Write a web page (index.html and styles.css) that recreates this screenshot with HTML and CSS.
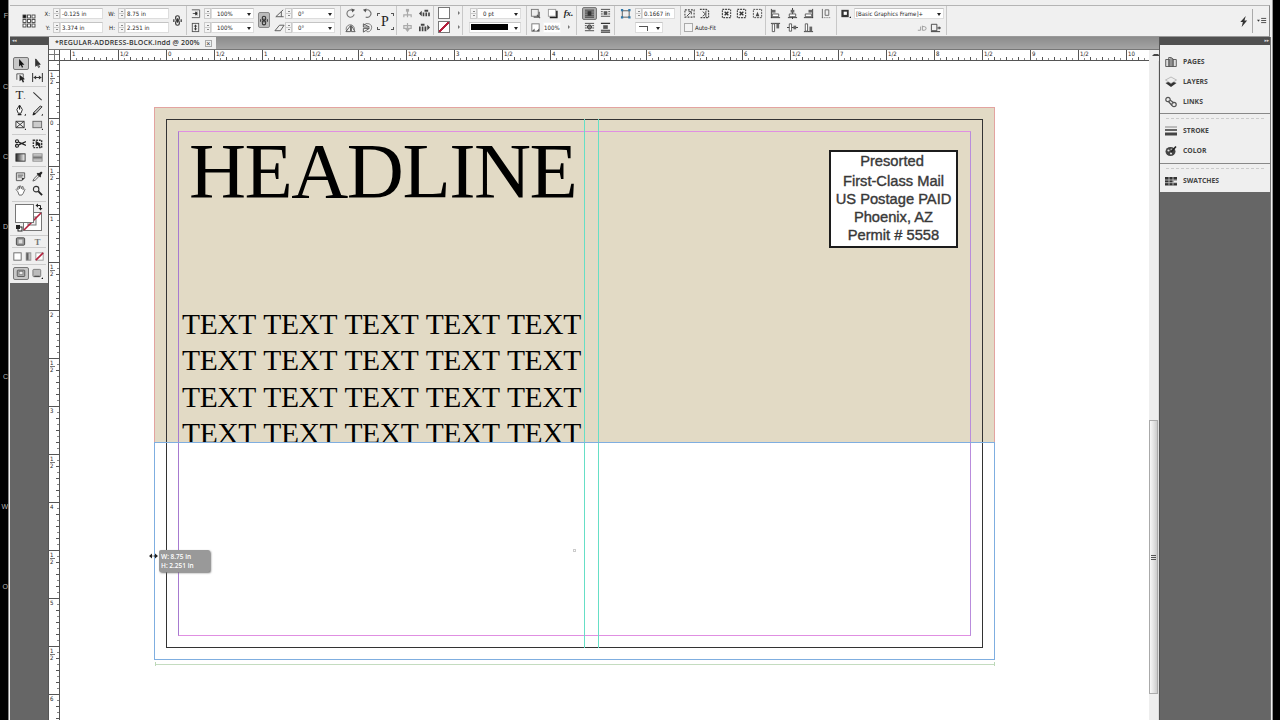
FILE: index.html
```html
<!DOCTYPE html>
<html lang="en">
<head>
  <meta charset="UTF-8" />
  <meta name="viewport" content="width=device-width, initial-scale=1.0" />
  <title>REGULAR-ADDRESS-BLOCK.indd</title>
  <link rel="stylesheet" href="styles.css">
</head>
<body>
  <!-- icon sprite -->
  <svg class="sprite">
    <symbol id="refpoint" viewBox="0 0 14 14"><g fill="#fff" stroke="#444" stroke-width=".9"><rect x="1" y="1" width="3" height="3" fill="#111"/><rect x="5.5" y="1" width="3" height="3"/><rect x="10" y="1" width="3" height="3"/><rect x="1" y="5.5" width="3" height="3"/><rect x="5.5" y="5.5" width="3" height="3"/><rect x="10" y="5.5" width="3" height="3"/><rect x="1" y="10" width="3" height="3"/><rect x="5.5" y="10" width="3" height="3"/><rect x="10" y="10" width="3" height="3"/></g></symbol>
    <symbol id="chain" viewBox="0 0 12 12"><g fill="none" stroke="#333" stroke-width="1.3"><rect x="4" y=".8" width="4" height="5" rx="2"/><rect x="4" y="6.2" width="4" height="5" rx="2"/><path d="M6 3.5v5M2 4.5v3M10 4.5v3"/></g></symbol>
    <symbol id="scale-x" viewBox="0 0 12 12"><path d="M2 2h8.500v8.500H2M3 6h5M6 4v4" fill="none" stroke="#555"/><path d="M5 6l3-2.500v5z" fill="#333"/></symbol>
    <symbol id="scale-y" viewBox="0 0 12 12"><rect x="2.500" y="1.500" width="7" height="9" fill="none" stroke="#555"/><path d="M6 3v6" stroke="#333"/><path d="M4 5l2-2 2 2zM4 7l2 2 2-2z" fill="#333"/></symbol>
    <symbol id="angle" viewBox="0 0 12 12"><path d="M10 2L2 9.500h8.500M8 4v5.500" fill="none" stroke="#555"/></symbol>
    <symbol id="shear" viewBox="0 0 12 12"><path d="M1 9.500h6l4-6H6z" fill="none" stroke="#555"/></symbol>
    <symbol id="rot-cw" viewBox="0 0 12 12"><path d="M10 7A4 4 0 1 1 8.500 2.800" fill="none" stroke="#777" stroke-width="1.200"/><path d="M7 .5l4 1.500-3 3z" fill="#555"/></symbol>
    <symbol id="rot-ccw" viewBox="0 0 12 12"><path d="M3.500 2.800A4 4 0 1 1 4 9.700" fill="none" stroke="#777" stroke-width="1.200"/><path d="M5 .5L1 2l3 3z" fill="#555"/></symbol>
    <symbol id="flip-h" viewBox="0 0 12 12"><path d="M2 10A4.500 4.500 0 1 1 10 9" fill="none" stroke="#777"/><path d="M1 10.500L6 4v6.500zM7 10.500V4l4 6.500z" fill="none" stroke="#555"/></symbol>
    <symbol id="flip-v" viewBox="0 0 12 12"><path d="M2 4A4.500 4.500 0 1 1 5 10.500" fill="none" stroke="#777"/><path d="M1.500 5.500H8L1.500 2zM1.500 7H8l-6.500 4z" fill="none" stroke="#555"/></symbol>
    <symbol id="tree-up" viewBox="0 0 12 12"><path d="M6 2v5M2 10V7.500h8V10M6 7v3" fill="none" stroke="#aaa" stroke-width="1.300"/><path d="M4.300 1h3.400v3H4.300z" fill="#aaa"/></symbol>
    <symbol id="tree-down" viewBox="0 0 12 12"><path d="M2 4h8v3H2zM6 1v9" fill="none" stroke="#aaa" stroke-width="1.300"/><path d="M3.500 7.500h5L6 11z" fill="#aaa"/></symbol>
    <symbol id="tree-prev" viewBox="0 0 12 12"><path d="M0 6l3-3v6zM4 5h1.800v4H4zM7 5h1.800v4H7zM10 5h1.800v4H10zM6 2h4v2H6z" fill="#444"/></symbol>
    <symbol id="tree-next" viewBox="0 0 12 12"><path d="M12 6L9 3v6zM0 5h1.800v5H0zM3 5h1.800v5H3zM6 5h2v5H6zM2 2h4v2H2z" fill="#444"/></symbol>
    <symbol id="effect" viewBox="0 0 12 12"><rect x="1.500" y="1.500" width="7.500" height="7.500" fill="#eee" stroke="#777"/><path d="M7.500 7.500l3.500 3.500M10 4v6H4" stroke="#555" stroke-width="1.200" fill="none"/></symbol>
    <symbol id="shadow" viewBox="0 0 12 12"><path d="M3 10h7.500V3" fill="none" stroke="#222" stroke-width="2.200"/><rect x="1.500" y="1.500" width="8" height="7.500" fill="#fff" stroke="#999"/></symbol>
    <symbol id="opacity" viewBox="0 0 12 12"><rect x="2" y="2" width="8" height="8" fill="#fff" stroke="#777"/><path d="M2 10l3-3v3zM7 10h3V7z" fill="#555"/></symbol>
    <symbol id="wrap-none" viewBox="0 0 12 12"><path d="M0 1.500h12M0 4h12M0 6.500h12M0 9h12M0 11h12" stroke="#222"/><path d="M3.500 3h5v6h-5z" fill="#333"/></symbol>
    <symbol id="wrap-box" viewBox="0 0 12 12"><path d="M1 1.500h10M1 4h2M9 4h2M1 6.500h2M9 6.500h2M1 9h10" stroke="#444"/><path d="M4 3.500h4v4H4z" fill="#555"/></symbol>
    <symbol id="wrap-shape" viewBox="0 0 12 12"><path d="M1 1.500h10M1 4h2M9 4h2M1 6.500h2M9 6.500h2M1 9.500h10" stroke="#444"/><circle cx="6" cy="5.500" r="2.300" fill="#777" stroke="#333"/></symbol>
    <symbol id="wrap-jump" viewBox="0 0 12 12"><path d="M1 1.500h10M1 9h10M1 11h10" stroke="#333" stroke-width="1.200"/><path d="M3.500 3.500h5v4h-5z" fill="#555"/></symbol>
    <symbol id="corner" viewBox="0 0 12 12"><path d="M2.500 2v8.500M2 10h8V3H2" fill="none" stroke="#555"/><path d="M1 1h2.500v2.500H1zM9 1h2.500v2.500H9zM1 9h2.500v2.500H1zM9 9h2.500v2.500H9z" fill="#2f78a8"/></symbol>
    <symbol id="fit-a" viewBox="0 0 12 12"><path d="M1 2h10v8H1z" fill="none" stroke="#444" stroke-dasharray="2 1.300" stroke-width="1.200"/><path d="M3 9l4-4M5 4h3v3" stroke="#444" fill="none"/></symbol>
    <symbol id="fit-b" viewBox="0 0 12 12"><path d="M1 1.500h7l2.500 2v7H1" fill="none" stroke="#444" stroke-dasharray="2 1" stroke-width="1.200"/><path d="M4 4l3 2.500L4 9M7.500 3v7" fill="none" stroke="#444"/></symbol>
    <symbol id="fit-c" viewBox="0 0 12 12"><path d="M1.500 1.500h9v9h-9z" fill="none" stroke="#444" stroke-dasharray="2 1" stroke-width="1.200"/><path d="M4 4l4 4M8 4L4 8" stroke="#333" stroke-width="1.500"/></symbol>
    <symbol id="fit-d" viewBox="0 0 12 12"><path d="M1.500 1.500h9v9h-9z" fill="none" stroke="#444" stroke-dasharray="2 1"/><path d="M4 9l2-5 2 5z" fill="#444"/></symbol>
    <symbol id="al-left" viewBox="0 0 12 12"><path d="M1.500 1v10M1 10.500h10" stroke="#333"/><path d="M2 2h4v3H2z" fill="#666"/><path d="M2.500 6.500h7v3h-7z" fill="#fff" stroke="#555"/></symbol>
    <symbol id="al-mid" viewBox="0 0 12 12"><path d="M6 0v12M1 10.500h10" stroke="#333"/><path d="M4 2h4v3H4z" fill="#666"/><path d="M2.500 6.500h7v3h-7z" fill="#fff" stroke="#555"/></symbol>
    <symbol id="al-right" viewBox="0 0 12 12"><path d="M10.500 1v10M1 10.500h10" stroke="#333"/><path d="M6 2h4v3H6z" fill="#666"/><path d="M2.500 6.500h7v3h-7z" fill="#fff" stroke="#555"/></symbol>
    <symbol id="al-top" viewBox="0 0 12 12"><path d="M1 1.500h10" stroke="#333"/><path d="M2.500 2h2.500v8.500H2.500z" fill="#fff" stroke="#555"/><path d="M7 2h3v5H7z" fill="#666"/></symbol>
    <symbol id="al-vmid" viewBox="0 0 12 12"><path d="M0 6h12" stroke="#333"/><path d="M2.500 2h2.500v8H2.500z" fill="#fff" stroke="#555"/><path d="M7 4h3v4H7z" fill="#666"/></symbol>
    <symbol id="al-bot" viewBox="0 0 12 12"><path d="M1 10.500h10" stroke="#333"/><path d="M2.500 2h2.500v8H2.500z" fill="#fff" stroke="#555"/><path d="M7 5h3v5H7z" fill="#666"/></symbol>
    <symbol id="al-to" viewBox="0 0 12 12"><path d="M1.500 1v10M4.500 2h4v6h-4z" fill="none" stroke="#666"/><path d="M1 10.500h10" stroke="#666" stroke-dasharray="1 1"/></symbol>
    <symbol id="obj-style" viewBox="0 0 12 12"><rect x="1.500" y="2" width="8" height="8" fill="#333"/><rect x="4" y="4" width="3.500" height="3.500" fill="#fff"/><path d="M10 11h2V9z" fill="#222"/></symbol>
    <symbol id="clear" viewBox="0 0 12 12"><path d="M2 9h3V5M7 4v5h2a2 2 0 0 0 0-4H7" fill="none" stroke="#999"/></symbol>
    <symbol id="clear-x" viewBox="0 0 12 12"><path d="M1.500 2.500h6v7h-6z" fill="none" stroke="#444"/><path d="M1 10.500h10M8 6.500h4M10 5v3" stroke="#333"/></symbol>
    <symbol id="bolt" viewBox="0 0 12 12"><path d="M8.500 0L2.500 6.500h2.800L4 12l6-7H7z" fill="#333"/></symbol>
    <symbol id="flyout" viewBox="0 0 12 12"><path d="M0 5h3.500L1.800 7.500z" fill="#333"/><path d="M5 3.500h6M5 6h6M5 8.500h6" stroke="#333"/></symbol>
    <!-- tools -->
    <symbol id="t-select" viewBox="0 0 12 12"><path d="M3.500 0v10l2.300-2 1.500 3.500 1.500-.7-1.500-3.300h3.200z" fill="#111"/></symbol>
    <symbol id="t-direct" viewBox="0 0 12 12"><path d="M4 1v8l1.800-1.600 1.400 3 1-.5-1.400-3H9z" fill="#fff" stroke="#222" stroke-width=".9"/><path d="M4 1v7l5-1.300z" fill="#333"/></symbol>
    <symbol id="t-page" viewBox="0 0 12 12"><path d="M2 8.500V2h7v7" fill="none" stroke="#555"/><path d="M5 3v7l2-1.500 1.500 3L10 11 8.500 8H11z" fill="#222"/></symbol>
    <symbol id="t-gap" viewBox="0 0 12 12"><path d="M.7 1v10M11.300 1v10M2 6h8" stroke="#333" stroke-width="1.100"/><path d="M1.500 6l3-2.300v4.600zM10.500 6l-3-2.300v4.600z" fill="#333"/></symbol>
    <symbol id="t-line" viewBox="0 0 12 12"><path d="M1.500 1.500l9 8.500" stroke="#333" stroke-width="1.100"/></symbol>
    <symbol id="t-pen" viewBox="0 0 12 12"><path d="M5 0l3 5-1.500 4h-3L2 5z" fill="#fff" stroke="#222"/><path d="M5 1v4M3 10.500h4" stroke="#222" stroke-width="1.300"/><path d="M10 11.500h2v-2z" fill="#111"/></symbol>
    <symbol id="t-pencil" viewBox="0 0 12 12"><path d="M1 11l1-3 7-7 2 1-6.500 7z" fill="#bbb" stroke="#333"/><path d="M1 11l1-3 1.800 2z" fill="#111"/><path d="M10 11.500h2v-2z" fill="#111"/></symbol>
    <symbol id="t-frame" viewBox="0 0 12 12"><path d="M1 2.500h9v7H1zM1 2.500l9 7M10 2.500l-9 7" fill="none" stroke="#333"/><path d="M10.500 12H12v-2z" fill="#111"/></symbol>
    <symbol id="t-rect" viewBox="0 0 12 12"><rect x="1" y="2.500" width="9.500" height="7" fill="#ccc" stroke="#666"/><path d="M10.500 12H12v-2z" fill="#111"/></symbol>
    <symbol id="t-scissors" viewBox="0 0 12 12"><path d="M4 4.500L12 8M4 7.500L12 4" stroke="#222" stroke-width="1.300"/><g fill="none" stroke="#222" stroke-width="1.300"><circle cx="2.200" cy="3.500" r="1.600"/><circle cx="2.200" cy="8.500" r="1.600"/></g></symbol>
    <symbol id="t-free" viewBox="0 0 12 12"><path d="M1.500 2.500h9v8h-9z" fill="none" stroke="#333" stroke-dasharray="2 1" stroke-width="1.600"/><path d="M4 3v6l2-1.300 3 3.300V6z" fill="#222"/></symbol>
    <symbol id="t-grad" viewBox="0 0 12 12"><rect x="1" y="2" width="10" height="8" fill="url(#g-h)" stroke="#333"/></symbol>
    <symbol id="t-feather" viewBox="0 0 12 12"><rect x="1" y="2" width="10" height="8" fill="url(#g-v)" stroke="#888"/></symbol>
    <symbol id="t-note" viewBox="0 0 12 12"><path d="M1.500 2h9v5.500l-3 3h-6z" fill="#ddd" stroke="#555"/><path d="M3 4.500h6M3 6.500h5" stroke="#555"/><path d="M10.500 7.500h-3v3z" fill="#333"/></symbol>
    <symbol id="t-eye" viewBox="0 0 12 12"><path d="M1 11l1-2.500 4-4 1.500 1.500-4 4z" fill="#eee" stroke="#555"/><path d="M5 3l4 4 1-1.500L9.500 4.500 11.500 2 10 .5 7.500 2.500 6.500 2z" fill="#222"/></symbol>
    <symbol id="t-hand" viewBox="0 0 12 12"><path d="M3 7L1 5l1-1 1.500 1L3 2l1-.5L5 4V1h1.200L7 4l1-2.500 1 .5-.5 3L10 4l.8.8L9 9l-1.500 2h-3z" fill="#fff" stroke="#555" stroke-width=".9"/></symbol>
    <symbol id="t-zoom" viewBox="0 0 12 12"><circle cx="4.500" cy="4.500" r="3" fill="#eee" stroke="#333" stroke-width="1.200"/><path d="M7 7l4 4" stroke="#222" stroke-width="2"/></symbol>
    <symbol id="t-box" viewBox="0 0 12 12"><rect x="1.500" y="2" width="9" height="8" rx="1" fill="#999" stroke="#444"/><rect x="4" y="4" width="4" height="4" fill="#ddd"/></symbol>
    <symbol id="t-white" viewBox="0 0 12 12"><rect x="2" y="2" width="8" height="8" fill="#fff" stroke="#666"/></symbol>
    <symbol id="t-small" viewBox="0 0 12 12"><rect x="3.500" y="2" width="5" height="8" fill="url(#g-h)" stroke="#888"/></symbol>
    <symbol id="t-none" viewBox="0 0 12 12"><rect x="2" y="2" width="8" height="8" fill="#fff" stroke="#999"/><path d="M2 10l8-8" stroke="#b3203c" stroke-width="1.800"/></symbol>
    <symbol id="t-view" viewBox="0 0 12 12"><rect x="1" y="1.500" width="10" height="8.500" rx="1" fill="#aaa" stroke="#444"/><rect x="3.500" y="3.500" width="5" height="4" fill="#eee" stroke="#666" stroke-width=".7"/></symbol>
    <symbol id="t-preview" viewBox="0 0 12 12"><rect x="1" y="1.500" width="8.500" height="8" rx="1" fill="#bbb" stroke="#777"/><path d="M2.500 9h6" stroke="#333"/><path d="M10 12h2v-2z" fill="#111"/></symbol>
    <!-- dock -->
    <symbol id="p-pages" viewBox="0 0 12 12"><path d="M.7 3.500h4v7h-4zM7.300 3.500h4v7h-4zM3.700 1.500h2.300l2.300 1.500v7.500H3.700zM6 2v8.500" fill="#ddd" stroke="#555" stroke-width=".9"/></symbol>
    <symbol id="p-layers" viewBox="0 0 12 12"><path d="M.5 7L6 11l5.500-4L6 5z" fill="#333"/><path d="M.5 4L6 7.500 11.500 4 6 1z" fill="#eee" stroke="#999" stroke-width=".6"/></symbol>
    <symbol id="p-links" viewBox="0 0 12 12"><g fill="none" stroke="#555" stroke-width="1.200"><circle cx="3" cy="3.500" r="2.200"/><circle cx="9" cy="8.500" r="2.200"/><path d="M3 5l4 4.500M5 4l4 3"/></g></symbol>
    <symbol id="p-stroke" viewBox="0 0 12 12"><path d="M0 2h12" stroke="#888"/><path d="M0 5h12" stroke="#666" stroke-width="2"/><path d="M0 9h12" stroke="#444" stroke-width="3"/></symbol>
    <symbol id="p-color" viewBox="0 0 12 12"><ellipse cx="5.500" cy="6.500" rx="5" ry="4.500" fill="#444"/><circle cx="3.500" cy="5.500" r="1.100" fill="#ddd"/><circle cx="6" cy="8.500" r="1.100" fill="#ddd"/><circle cx="6.500" cy="4.500" r="1.100" fill="#aaa"/><path d="M6 7l5-5.500" stroke="#222" stroke-width="1.600"/></symbol>
    <symbol id="p-swatches" viewBox="0 0 12 12"><path d="M0 2h12v8.500H0z" fill="#333"/><path d="M4 2v8.500M8 2v8.500M0 5h12M0 7.700h12" stroke="#ccc" stroke-width=".8"/><path d="M8.500 5.500H12v2H8.500z" fill="#eee"/></symbol>
    <linearGradient id="g-h"><stop offset="0" stop-color="#222"/><stop offset="1" stop-color="#fff"/></linearGradient>
    <linearGradient id="g-v" x2="0" y2="1"><stop offset="0" stop-color="#eee"/><stop offset=".5" stop-color="#777"/><stop offset="1" stop-color="#eee"/></linearGradient>
  </svg>

  <!-- desktop labels behind the window -->
  <div class="desktop">
    <span style="top:11px">F</span>
    <span style="top:82px">C</span>
    <span style="top:152px">C</span>
    <span style="top:222px">D</span>
    <span style="top:372px">C</span>
    <span style="top:502px">W</span>
    <span style="top:582px">O</span>
  </div>

  <div class="window">
    <div class="control-bar">
      <div class="group g-pos">
        <svg class="tall ref"><use href="#refpoint"/></svg>
        <label>X:</label><i class="spin"></i><span class="field">-0.125 in</span>
        <label>W:</label><i class="spin"></i><span class="field">8.75 in</span>
        <svg class="tall"><use href="#chain"/></svg>
        <label>Y:</label><i class="spin"></i><span class="field">3.374 in</span>
        <label>H:</label><i class="spin"></i><span class="field">2.251 in</span>
      </div>
      <div class="group g-scale">
        <svg><use href="#scale-x"/></svg><i class="spin"></i><span class="field combo">100%</span>
        <span class="tall lock"><svg><use href="#chain"/></svg></span>
        <svg><use href="#angle"/></svg><i class="spin"></i><span class="field combo">0°</span>
        <svg><use href="#scale-y"/></svg><i class="spin"></i><span class="field combo">100%</span>
        <svg><use href="#shear"/></svg><i class="spin"></i><span class="field combo">0°</span>
      </div>
      <div class="group g-rotate">
        <svg><use href="#rot-cw"/></svg><svg><use href="#rot-ccw"/></svg>
        <span class="tall flip-state">P</span>
        <svg><use href="#flip-h"/></svg><svg><use href="#flip-v"/></svg>
      </div>
      <div class="group g-tree">
        <svg><use href="#tree-up"/></svg><svg><use href="#tree-prev"/></svg>
        <svg><use href="#tree-down"/></svg><svg><use href="#tree-next"/></svg>
      </div>
      <div class="group g-fill">
        <i class="chip"></i><i class="more"></i>
        <i class="chip none"></i><i class="more"></i>
      </div>
      <div class="group g-stroke">
        <i class="spin"></i><span class="field combo">0 pt</span>
        <span class="field combo wide"><i class="line"></i></span>
      </div>
      <div class="group g-fx">
        <svg><use href="#effect"/></svg><svg><use href="#shadow"/></svg><em>fx.</em>
        <svg><use href="#opacity"/></svg><span class="field">100%</span><i class="more"></i>
      </div>
      <div class="group g-wrap">
        <svg class="on"><use href="#wrap-none"/></svg><svg><use href="#wrap-box"/></svg>
        <svg><use href="#wrap-shape"/></svg><svg><use href="#wrap-jump"/></svg>
      </div>
      <div class="group g-corner">
        <svg><use href="#corner"/></svg><i class="spin"></i><span class="field">0.1667 in</span>
        <span class="field combo corner-shape"><i></i></span>
      </div>
      <div class="group g-fit">
        <svg><use href="#fit-a"/></svg><svg><use href="#fit-b"/></svg>
        <svg class="apart"><use href="#fit-c"/></svg><svg><use href="#fit-c"/></svg><svg><use href="#fit-d"/></svg>
        <span class="check"><i></i>Auto-Fit</span>
      </div>
      <div class="group g-align">
        <svg><use href="#al-left"/></svg><svg><use href="#al-mid"/></svg><svg><use href="#al-right"/></svg><svg><use href="#al-to"/></svg>
        <svg><use href="#al-top"/></svg><svg><use href="#al-vmid"/></svg><svg><use href="#al-bot"/></svg>
      </div>
      <div class="group g-style">
        <svg><use href="#obj-style"/></svg><span class="field combo">[Basic Graphics Frame]+</span>
        <span class="clears"><svg><use href="#clear"/></svg><svg><use href="#clear-x"/></svg></span>
      </div>
      <div class="bar-end">
        <svg><use href="#bolt"/></svg>
        <span><svg><use href="#flyout"/></svg></span>
      </div>
    </div>

    <div class="workspace">
      <div class="toolbox">
        <div class="strip">◂◂</div>
        <div class="tools">
          <div class="set s1">
            <svg class="on"><use href="#t-select"/></svg><svg><use href="#t-direct"/></svg>
            <svg><use href="#t-page"/></svg><svg><use href="#t-gap"/></svg>
          </div>
          <div class="set s2">
            <b class="type">T<small>.</small></b><svg><use href="#t-line"/></svg>
            <svg><use href="#t-pen"/></svg><svg><use href="#t-pencil"/></svg>
            <svg><use href="#t-frame"/></svg><svg><use href="#t-rect"/></svg>
          </div>
          <div class="set s3">
            <svg><use href="#t-scissors"/></svg><svg><use href="#t-free"/></svg>
            <svg><use href="#t-grad"/></svg><svg><use href="#t-feather"/></svg>
          </div>
          <div class="set s4">
            <svg><use href="#t-note"/></svg><svg><use href="#t-eye"/></svg>
            <svg><use href="#t-hand"/></svg><svg><use href="#t-zoom"/></svg>
          </div>
          <div class="proxy">
            <svg viewBox="0 0 38 34"><rect x="13.500" y="10.500" width="18" height="18" fill="#fff" stroke="#777"/><rect x="18" y="15" width="8" height="8" fill="#eee" stroke="#777"/><path d="M14 28l17-17" stroke="#b3203c" stroke-width="1.600"/><rect x="5.500" y="2.500" width="18" height="18" fill="#fff" stroke="#777"/><path d="M27 3.500h3.500V7" fill="none" stroke="#222"/><path d="M28 1.500v4l-2.500-2zM28.500 6h4l-2 2.500z" fill="#222"/><rect x="8" y="25" width="4" height="4" fill="#fff" stroke="#222"/><rect x="6" y="23" width="4" height="4" fill="#222"/></svg>
          </div>
          <div class="set s5"><svg><use href="#t-box"/></svg><b class="mode">T</b></div>
          <div class="set s6"><svg><use href="#t-white"/></svg><svg><use href="#t-small"/></svg><svg><use href="#t-none"/></svg></div>
          <div class="set s7"><svg class="on"><use href="#t-view"/></svg><svg><use href="#t-preview"/></svg></div>
        </div>
      </div>

      <div class="document">
        <div class="tabs"><div class="tab">*REGULAR-ADDRESS-BLOCK.indd @ 200% <i>×</i></div></div>
        <div class="h-ruler">
          <i class="origin"></i>
          <div class="h-marks"><span>1</span><span>1/2</span><span>0</span><span>1/2</span><span>1</span><span>1/2</span><span>2</span><span>1/2</span><span>3</span><span>1/2</span><span>4</span><span>1/2</span><span>5</span><span>1/2</span><span>6</span><span>1/2</span><span>7</span><span>1/2</span><span>8</span><span>1/2</span><span>9</span><span>1/2</span><span>10</span></div>
          <i class="scroll-up"></i>
        </div>
        <div class="view">
          <div class="v-ruler">
            <span><u>1</u>2</span><span>0</span><span><u>1</u>2</span><span>1</span><span><u>1</u>2</span><span>2</span><span><u>1</u>2</span><span>3</span><span><u>1</u>2</span><span>4</span><span><u>1</u>2</span><span>5</span><span><u>1</u>2</span><span>6</span>
          </div>
          <div class="canvas">
            <div class="art">
              <h1>HEADLINE</h1>
              <p>TEXT TEXT TEXT TEXT TEXT<br>TEXT TEXT TEXT TEXT TEXT<br>TEXT TEXT TEXT TEXT TEXT<br>TEXT TEXT TEXT TEXT TEXT</p>
              <div class="stamp"><span>Presorted</span>First-Class Mail<br>US Postage PAID<br>Phoenix, AZ<br>Permit # 5558</div>
            </div>
            <div class="page-edge"></div>
            <div class="margins"></div>
            <div class="guides"></div>
            <div class="selection"></div>
            <div class="measure"></div>
            <div class="center"></div>
            <svg class="cursor" viewBox="0 0 9 6"><path d="M0 3l3-2.500v5zM9 3L6 .5v5z" fill="#222"/><path d="M2 3h5" stroke="#222" stroke-dasharray="1.500 1"/></svg>
            <div class="tip">W: 8.75 in<br>H: 2.251 in</div>
          </div>
          <div class="scrollbar"><div class="thumb"><i></i></div></div>
        </div>
      </div>

      <div class="dock">
        <div class="strip">▸▸</div>
        <div class="panel p1">
          <div><svg><use href="#p-pages"/></svg>PAGES</div>
          <div><svg><use href="#p-layers"/></svg>LAYERS</div>
          <div><svg><use href="#p-links"/></svg>LINKS</div>
        </div>
        <div class="panel p2">
          <div><svg><use href="#p-stroke"/></svg>STROKE</div>
          <div><svg><use href="#p-color"/></svg>COLOR</div>
        </div>
        <div class="panel p3">
          <div><svg><use href="#p-swatches"/></svg>SWATCHES</div>
        </div>
      </div>
    </div>
  </div>
</body>
</html>
```
FILE: styles.css
```css
* {
  box-sizing: border-box;
}

body {
  margin: 0;
  width: 1280px;
  height: 720px;
  overflow: hidden;
  background: #000;
  color: #222;
  font-family: "DejaVu Sans Condensed", "DejaVu Sans", sans-serif;
  font-size: 6px;
  display: flex;
}

i, em {
  font-style: normal;
}

svg {
  display: block;
  width: 11px;
  height: 11px;
}

.sprite {
  position: absolute;
  width: 0;
  height: 0;
}

.desktop {
  position: relative;
  width: 8px;
  overflow: hidden;
  flex: none;
}

.desktop span {
  position: absolute;
  right: 0;
  color: #bbb;
  font: 7px/10px "Liberation Sans", sans-serif;
}

.window {
  width: 1265px;
  height: 720px;
  padding: 5px 2px 0 1px;
  background: #efefef;
  border-left: 1px solid #888;
  border-right: 1px solid #999;
}

/* control bar */
.control-bar {
  display: flex;
  height: 32px;
  border-top: 1px solid #b4b4b4;
  border-right: 1px solid #888;
  border-bottom: 1px solid #999;
  background: #f0f0f0;
}

.group {
  display: grid;
  grid-auto-rows: 14px;
  align-items: center;
  justify-items: center;
  flex: none;
  height: 29px;
  border-right: 1px solid #c8c8c8;
}

.tall {
  grid-row: 1 / span 2;
}

.g-pos { width: 177px; grid-template-columns: 33px 10px 7px 43px 15px 7px 44px 17px; }
.g-pos .tall:not(.ref) { grid-column: 8; }
.g-scale { width: 154px; grid-template-columns: 17px 7px 43px 19px 12px 7px 43px; }
.g-rotate { width: 56px; grid-template-columns: 19px 15px 20px; }
.g-tree { width: 37px; padding-left: 1px; grid-template-columns: 18px 17px; }
.g-fill { width: 29px; grid-template-columns: 20px 8px; }
.g-stroke { width: 64px; padding-left: 6px; grid-template-columns: 8px 44px; }
.g-fx { width: 50px; grid-template-columns: 16px 18px 15px; }
.g-wrap { width: 38px; padding-left: 4px; grid-template-columns: 16px 17px; }
.g-corner { width: 66px; grid-template-columns: 20px 7px 33px; }
.g-fit { width: 85px; grid-template-columns: 17px 13px 23px 15px 16px; }
.g-align { width: 71px; grid-template-columns: 18px 16px 17px 19px; }
.g-style { width: 110px; grid-template-columns: 17px 90px; }

.ref {
  width: 14px;
  height: 14px;
  margin: 1px 0 0 4px;
}

.group label {
  justify-self: end;
  padding-right: 3px;
}

.spin {
  width: 7px;
  height: 11px;
  border: 1px solid #ccc;
  background: linear-gradient(#888, #888) 2px 2px / 2px 1px no-repeat,
    linear-gradient(#888, #888) 2px 6px / 2px 1px no-repeat,
    linear-gradient(#ccc, #ccc) 0 4px / 7px 1px no-repeat #f4f4f4;
}

.field {
  width: 100%;
  height: 11px;
  padding-left: 1px;
  line-height: 9px;
  white-space: nowrap;
  background: #fff;
  border: 1px solid #ddd;
  border-top-color: #c4c4c4;
  letter-spacing: 0.05px;
}

.combo {
  position: relative;
  padding-left: 5px;
}

.combo::after {
  content: "";
  position: absolute;
  right: 2px;
  top: 4px;
  border: 2.5px solid transparent;
  border-top: 3px solid #222;
}

.g-style .combo {
  padding-left: 1px;
  letter-spacing: 0;
}

.lock {
  display: flex;
  align-items: center;
  justify-content: center;
  width: 12px;
  height: 16px;
  background: #bbb;
  border: 1px solid #888;
  border-radius: 2px;
}

.g-scale .lock {
  grid-column: 4;
}

.g-rotate .tall {
  grid-column: 3;
}

.flip-state {
  width: 17px;
  height: 17px;
  margin-top: 2px;
  text-align: center;
  font: 14px/17px "Liberation Serif", serif;
  background: linear-gradient(#555, #555) 0 0 / 3px 1px, linear-gradient(#555, #555) 0 0 / 1px 3px,
    linear-gradient(#555, #555) 100% 0 / 3px 1px, linear-gradient(#555, #555) 100% 0 / 1px 3px,
    linear-gradient(#555, #555) 0 100% / 3px 1px, linear-gradient(#555, #555) 0 100% / 1px 3px,
    linear-gradient(#555, #555) 100% 100% / 3px 1px, linear-gradient(#555, #555) 100% 100% / 1px 3px;
  background-repeat: no-repeat;
}

.chip {
  width: 12px;
  height: 12px;
  background: #fff;
  border: 1px solid #777;
}

.chip.none {
  background: linear-gradient(135deg, #fff 44%, #b3203c 45%, #b3203c 56%, #fff 57%);
}

.more {
  margin-left: 3px;
  border: 2px solid transparent;
  border-left: 2.5px solid #777;
}

.wide {
  grid-column: 1 / 3;
  display: flex;
  align-items: center;
  padding-left: 1px;
}

.line {
  width: 37px;
  height: 6px;
  background: #000;
}

.g-fx em {
  font: italic bold 9px "Liberation Serif", serif;
}

.g-fx .field {
  padding-left: 0;
  border-color: #f4f4f4;
}

.g-wrap .on {
  width: 15px;
  height: 13px;
  padding: 1px;
  background: #aaa;
  border: 1px solid #777;
  border-radius: 2px;
}

.corner-shape {
  grid-column: 2 / 4;
  width: 28px;
  justify-self: start;
}

.corner-shape i {
  display: block;
  width: 9px;
  height: 5px;
  margin: 3px 0 0 -2px;
  border: solid #555;
  border-width: 1px 1px 0 0;
}

.apart {
  margin-left: 7px;
}

.check {
  grid-column: 1 / -1;
  justify-self: start;
  display: flex;
  align-items: center;
  gap: 2px;
  padding-left: 3px;
}

.check i {
  width: 9px;
  height: 9px;
  border: 1px solid #aaa;
  background: #f4f4f4;
}

.clears {
  grid-column: 2;
  justify-self: end;
  display: flex;
  gap: 3px;
  padding-right: 3px;
}

.bar-end {
  display: flex;
  align-items: center;
  margin-left: auto;
}

.bar-end span {
  height: 24px;
  margin-left: 3px;
  padding: 6px 2px 0 4px;
  border-left: 1px solid #aaa;
}

.bar-end span svg {
  width: 10px;
}

/* workspace */
.workspace {
  display: flex;
  height: 683px;
}

.strip {
  height: 8px;
  padding-left: 2px;
  background: #505050;
  color: #ddd;
  font-size: 5px;
  line-height: 7px;
}

.toolbox {
  width: 39px;
  flex: none;
  background: #666;
  border-right: 1px solid #555;
}

.tools {
  height: 238px;
  padding-top: 11px;
  background: #efefef;
}

.set {
  display: grid;
  grid-template-columns: 17px 17px;
  grid-auto-rows: 14px;
  align-items: center;
  justify-items: center;
  margin: 0 2px;
  border-bottom: 1px solid #ccc;
}

.set .on {
  width: 16px;
  height: 13px;
  padding: 1px;
  background: #c8c8c8;
  border: 1px solid #777;
  border-radius: 2px;
}

.s1 { height: 31px; }
.s2 { height: 48px; padding-top: 2px; }
.s3 { height: 32px; padding-top: 1px; }
.s4 { height: 35px; padding-top: 2px; }
.s5 { height: 12px; grid-auto-rows: 11px; }
.s6 { height: 17px; grid-template-columns: 11px 11px 11px; grid-auto-rows: 16px; }
.s7 { height: 18px; grid-auto-rows: 17px; border: 0; }

.type {
  font: 13px/14px "Liberation Serif", serif;
}

.type small {
  font-size: 8px;
}

.mode {
  font: bold 9px/10px "Liberation Serif", serif;
  color: #777;
}

.proxy {
  height: 34px;
  border-bottom: 1px solid #ccc;
}

.proxy svg {
  width: 38px;
  height: 34px;
}

.document {
  width: 1110px;
  flex: none;
  background: #fff;
}

.tabs {
  height: 13px;
  background: linear-gradient(#8c8c8c, #a4a4a4);
  border-bottom: 1px solid #777;
}

.tab {
  display: flex;
  align-items: center;
  width: 167px;
  height: 12px;
  padding-left: 6px;
  white-space: nowrap;
  background: #f0f0f0;
  font: 600 7px/12px "Open Sans", sans-serif;
  letter-spacing: 0.18px;
  color: #333;
}

.tab i {
  width: 7px;
  height: 7px;
  margin-left: 5px;
  border: 1px solid #aaa;
  font: 7px/5px "Liberation Sans", sans-serif;
  text-align: center;
}

.h-ruler {
  display: flex;
  height: 11px;
}

.origin {
  width: 11px;
  flex: none;
  border-right: 1px solid #555;
  border-bottom: 1px solid #555;
  background: linear-gradient(#777, #777) 0 4px / 10px 1px no-repeat, linear-gradient(#777, #777) 5px 0 / 1px 11px no-repeat;
}

.h-marks {
  display: flex;
  width: 1089px;
  flex: none;
  overflow: hidden;
  padding-left: 10px;
  border-bottom: 1px solid #555;
  background: repeating-linear-gradient(90deg, #555 0 1px, transparent 1px 12px) -2px 7px / 1104px 3px no-repeat,
    repeating-linear-gradient(90deg, #888 0 1px, transparent 1px 6px) -2px 8px / 1104px 2px no-repeat;
}

.h-marks span {
  width: 48px;
  flex: none;
  padding-left: 1px;
  border-left: 1px solid #555;
  line-height: 7px;
}

.scroll-up {
  width: 10px;
  background: #eee;
}

.scroll-up::after {
  content: "";
  display: block;
  width: 4px;
  margin: 2px 0 0 3px;
  border: 2px solid transparent;
  border-bottom-color: #444;
}

.view {
  display: flex;
  height: 659px;
}

.v-ruler {
  width: 11px;
  flex: none;
  height: 659px;
  overflow: hidden;
  padding-top: 9px;
  border-right: 1px solid #555;
  background: repeating-linear-gradient(#555 0 1px, transparent 1px 12px) 7px -3px / 3px 700px no-repeat,
    repeating-linear-gradient(#888 0 1px, transparent 1px 6px) 8px -3px / 2px 700px no-repeat;
}

.v-ruler span {
  display: block;
  width: 10px;
  height: 48px;
  padding: 1px 0 0 1px;
  border-top: 1px solid #555;
  line-height: 6px;
}

.v-ruler u {
  display: block;
  width: 5px;
  height: 7px;
  text-decoration: none;
  border-bottom: 1px solid #777;
}

/* the pasteboard, everything on it sits at its own coordinates */
.canvas {
  position: relative;
  width: 1089px;
  flex: none;
  overflow: hidden;
  background: #fff;
}

.canvas > * {
  position: absolute;
}

.art {
  left: 94px;
  top: 46px;
  width: 841px;
  height: 336px;
  overflow: hidden;
  background: #e2dac5;
  border: 1px solid #e3a3a0;
  border-bottom: 0;
  color: #000;
  font-family: "Liberation Serif", serif;
}

.art h1 {
  position: absolute;
  left: 34px;
  top: 18px;
  margin: 0;
  font-size: 79px;
  line-height: 90px;
  font-weight: 400;
  letter-spacing: -1.5px;
}

.art p {
  position: absolute;
  left: 27px;
  top: 198px;
  margin: 0;
  font-size: 29.5px;
  line-height: 36.3px;
  letter-spacing: -0.35px;
  word-spacing: 1.3px;
  white-space: nowrap;
}

.stamp {
  position: absolute;
  left: 674px;
  top: 42px;
  width: 129px;
  height: 98px;
  border: 2px solid #1c1c1c;
  background: #fff;
  color: #333;
  text-align: center;
  white-space: nowrap;
  font: 14.7px/18px "Liberation Sans", sans-serif;
  -webkit-text-stroke: 0.4px #444;
}

.stamp span {
  display: block;
  height: 20px;
  padding-right: 3px;
}

.page-edge {
  left: 106px;
  top: 58px;
  width: 817px;
  height: 529px;
  border: 1px solid #333;
}

.margins {
  left: 118px;
  top: 70px;
  width: 793px;
  height: 505px;
  border: 1px solid #e08fe2;
  border-left-color: #a77ad0;
  border-right-color: #b98cdc;
}

.guides {
  left: 524px;
  top: 58px;
  width: 15px;
  height: 529px;
  border: solid #66dfc6;
  border-width: 0 1px;
}

.selection {
  left: 94px;
  top: 381px;
  width: 841px;
  height: 218px;
  border: 1px solid #7faee0;
}

.measure {
  left: 95px;
  top: 601px;
  width: 840px;
  height: 4px;
  border: solid #bcd8b8;
  border-width: 0 1px;
  background: linear-gradient(#c4dcc0, #c4dcc0) 0 2px / 100% 1px no-repeat;
}

.center {
  left: 513px;
  top: 488px;
  width: 3px;
  height: 3px;
  border: 1px solid #ccc;
}

.cursor {
  left: 89px;
  top: 492px;
  width: 9px;
  height: 6px;
}

.tip {
  left: 99px;
  top: 489px;
  width: 51px;
  height: 22px;
  padding: 2px;
  border-radius: 2px;
  background: #999;
  color: #fff;
  box-shadow: 1px 1px 2px #777;
  font: 600 6.5px/9px "Open Sans", sans-serif;
}

.scrollbar {
  width: 10px;
  flex: none;
  padding-top: 359px;
  background: #eee;
  border-right: 1px solid #ddd;
}

.thumb {
  display: flex;
  align-items: center;
  justify-content: center;
  height: 274px;
  border: 1px solid #aaa;
  background: linear-gradient(90deg, #f8f8f8, #e4e4e4 50%, #ccc);
}

.thumb i {
  width: 5px;
  height: 5px;
  background: repeating-linear-gradient(#555 0 1px, transparent 1px 2px);
}

/* panel dock */
.dock {
  width: 112px;
  flex: none;
  background: #666;
  border-left: 1px solid #555;
  border-right: 1px solid #777;
}

.dock .strip {
  padding-right: 1px;
  text-align: right;
}

.panel {
  background: #efefef;
  border-bottom: 1px solid #888;
  font: 700 6.8px/20px "Open Sans", sans-serif;
  color: #444;
}

.panel div {
  display: flex;
  align-items: center;
  gap: 6px;
  height: 20px;
  padding-left: 5px;
}

.panel svg {
  width: 12px;
  height: 12px;
}

.p1 { height: 69px; padding-top: 7px; }
.p2 { height: 50px; padding-top: 7px; }
.p3 { height: 28px; padding-top: 7px; border: 0; }

.p2, .p3 {
  background: repeating-linear-gradient(90deg, #ccc 0 3px, transparent 3px 5px) 6px 4px / 98px 1px no-repeat #efefef;
}
```
